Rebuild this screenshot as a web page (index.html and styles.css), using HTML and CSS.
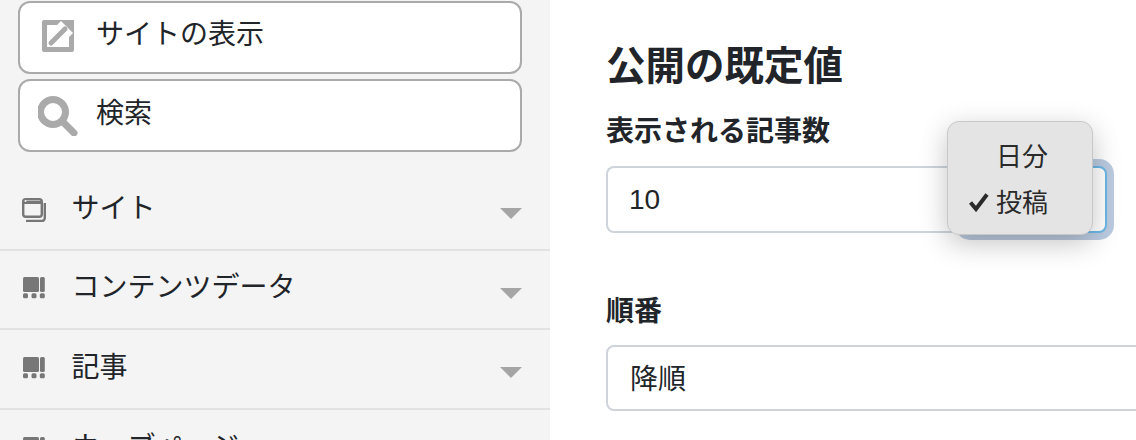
FILE: index.html
```html
<!DOCTYPE html>
<html lang="ja">
<head>
  <meta charset="UTF-8" />
  <title>公開の既定値</title>
  <link rel="stylesheet" href="styles.css">
</head>
<body>
  <div class="page">
    <!-- Sidebar -->
    <aside class="sidebar">
      <div class="side-actions">
        <a class="side-btn">
          <svg class="btn-icon" viewBox="0 0 40 40" width="40" height="40">
            <path d="M6 2H24L19 7H9V29H31V19L36 14V32a2 2 0 0 1-2 2H6a2 2 0 0 1-2-2V4a2 2 0 0 1 2-2z" fill="#aaa"/>
            <path d="M13 25 L27 11" stroke="#aaa" stroke-width="5" stroke-linecap="round" fill="none"/>
            <path d="M22 2h14v14z" fill="#aaa"/>
          </svg>
          <span>サイトの表示</span>
        </a>
        <a class="side-btn">
          <svg class="btn-icon" viewBox="0 0 40 40" width="40" height="40">
            <circle cx="15" cy="16" r="12.500" stroke="#aaa" stroke-width="7" fill="none"/>
            <path d="M25 26 L36 37" stroke="#aaa" stroke-width="7" stroke-linecap="round" fill="none"/>
          </svg>
          <span>検索</span>
        </a>
      </div>

      <ul class="menu">
        <li class="menu-row">
          <svg class="menu-icon" viewBox="0 0 24 24" width="24" height="24">
            <rect x="1.200" y="1.200" width="18.600" height="17.600" rx="2.500" fill="none" stroke="#777" stroke-width="2.400"/>
            <path d="M1 4.500h19" stroke="#777" stroke-width="3"/>
            <circle cx="3.500" cy="3" r="1" fill="#f4f4f4"/>
            <path d="M22.800 5v15a3 3 0 0 1-3 3H4" fill="none" stroke="#777" stroke-width="2.400"/>
          </svg>
          <span>サイト</span>
          <i class="caret"></i>
        </li>
        <li class="menu-row">
          <svg class="menu-icon" viewBox="0 0 24 24" width="24" height="24">
            <use href="#grid-icon"/>
          </svg>
          <span>コンテンツデータ</span>
          <i class="caret"></i>
        </li>
        <li class="menu-row">
          <svg class="menu-icon" viewBox="0 0 24 24" width="24" height="24">
            <use href="#grid-icon"/>
          </svg>
          <span>記事</span>
          <i class="caret"></i>
        </li>
        <li class="menu-row">
          <svg class="menu-icon" viewBox="0 0 24 24" width="24" height="24">
            <use href="#grid-icon"/>
          </svg>
          <span>ウェブページ</span>
          <i class="caret"></i>
        </li>
      </ul>
      <svg class="defs" width="0" height="0">
        <g id="grid-icon" fill="#777">
          <rect x="1" y="0" width="16" height="15" rx="1.500"/>
          <rect x="18" y="0" width="4.800" height="15" rx="1.500"/>
          <rect x="1" y="16.200" width="5" height="5" rx="1.500"/>
          <rect x="9.500" y="16.200" width="5" height="5" rx="1.500"/>
          <rect x="17.800" y="16.200" width="5" height="5" rx="1.500"/>
        </g>
      </svg>
    </aside>

    <!-- Main form -->
    <main class="content">
      <h2>公開の既定値</h2>

      <div class="field">
        <label>表示される記事数</label>
        <div class="input-wrap">
          <div class="input grow">10</div>
          <div class="input select-box"></div>
          <div class="popup">
            <div class="popup-item">日分</div>
            <div class="popup-item">
              <svg class="check" viewBox="0 0 20 20" width="20" height="20">
                <path d="M1.500 10.500 L7 17 L18 2.500" fill="none" stroke="#2a2a2a" stroke-width="4"/>
              </svg>
              投稿
            </div>
          </div>
        </div>
      </div>

      <div class="field second">
        <label>順番</label>
        <div class="input wide">降順</div>
      </div>
    </main>
  </div>
</body>
</html>
```

FILE: styles.css
```css
/* ---------- reset ---------- */
*,*::before,*::after{box-sizing:border-box;}
html,body{margin:0;height:100%;overflow:hidden;}
body{
  font-family:"Liberation Sans","Noto Sans CJK JP",sans-serif;
  font-size:28px;
  line-height:1.5;
  color:#212529;
  background:#fff;
}

.page{display:flex;width:1136px;height:440px;overflow:hidden;}

/* ---------- sidebar ---------- */
.sidebar{
  width:550px;
  flex-shrink:0;
  background:#f4f4f4;
  padding-top:1px;
}
.side-actions{
  display:flex;
  flex-direction:column;
  gap:5px;
  padding:0 28px 0 18px;
}
.side-btn{
  display:flex;
  align-items:center;
  height:73px;
  padding:0 18px;
  gap:18px;
  background:#fff;
  border:2px solid #aaa;
  border-radius:12px;
}
.side-btn span{position:relative;top:-3px;}
.side-btn + .side-btn span{top:-2px;}
.btn-icon{flex-shrink:0;}

.menu{list-style:none;margin:19px 0 0;padding:0;}
.menu-row{
  display:flex;
  align-items:center;
  height:79.6px;
  padding:0 28px 0 22px;
  border-bottom:2px solid #e2e2e2;
}
.menu-row span{margin-left:25.5px;position:relative;top:-1px;}
.menu-icon{flex-shrink:0;}
.caret{
  margin-left:auto;
  margin-top:8px;
  width:0;
  height:0;
  border-left:11px solid transparent;
  border-right:11px solid transparent;
  border-top:11px solid #a5a5a5;
}
.defs{position:absolute;}

/* ---------- main ---------- */
.content{flex:1;min-width:0;padding:37px 0 0 56px;}
h2{
  margin:0;
  font-size:39.5px;
  font-weight:700;
  line-height:58px;
}
.field{margin-top:16px;}
.field.second{margin-top:58px;}
.field.second label{margin-bottom:12px;}
label{
  display:block;
  font-weight:700;
  font-size:28px;
  line-height:42px;
  margin-bottom:13px;
}
.input{
  height:67px;
  padding:0 22px;
  display:flex;
  align-items:center;
  background:#fff;
  border:2px solid #ced4da;
  border-radius:8px;
}
.input.grow{flex:1;padding-left:21px;border-radius:8px 0 0 8px;border-right:0;}
.input.select-box{
  width:145px;
  border-color:#6cb8e6;
  box-shadow:0 0 0 7px rgba(60,105,165,.35);
}
.input.wide{width:600px;height:66px;padding-top:3px;}
.input-wrap{position:relative;display:flex;width:501px;}

/* popup over the focused select */
.popup{
  position:absolute;
  left:341px;
  top:-45px;
  width:146px;
  height:114px;
  padding-top:12px;
  background:#e4e4e4;
  border:1px solid #c8c8c8;
  border-radius:12px;
  box-shadow:0 8px 28px rgba(0,0,0,.24);
  font-size:26px;
  color:#2a2a2a;
}
.popup-item{
  position:relative;
  height:46px;
  line-height:46px;
  padding-left:48px;
}
.check{position:absolute;left:21px;top:12px;}
```
